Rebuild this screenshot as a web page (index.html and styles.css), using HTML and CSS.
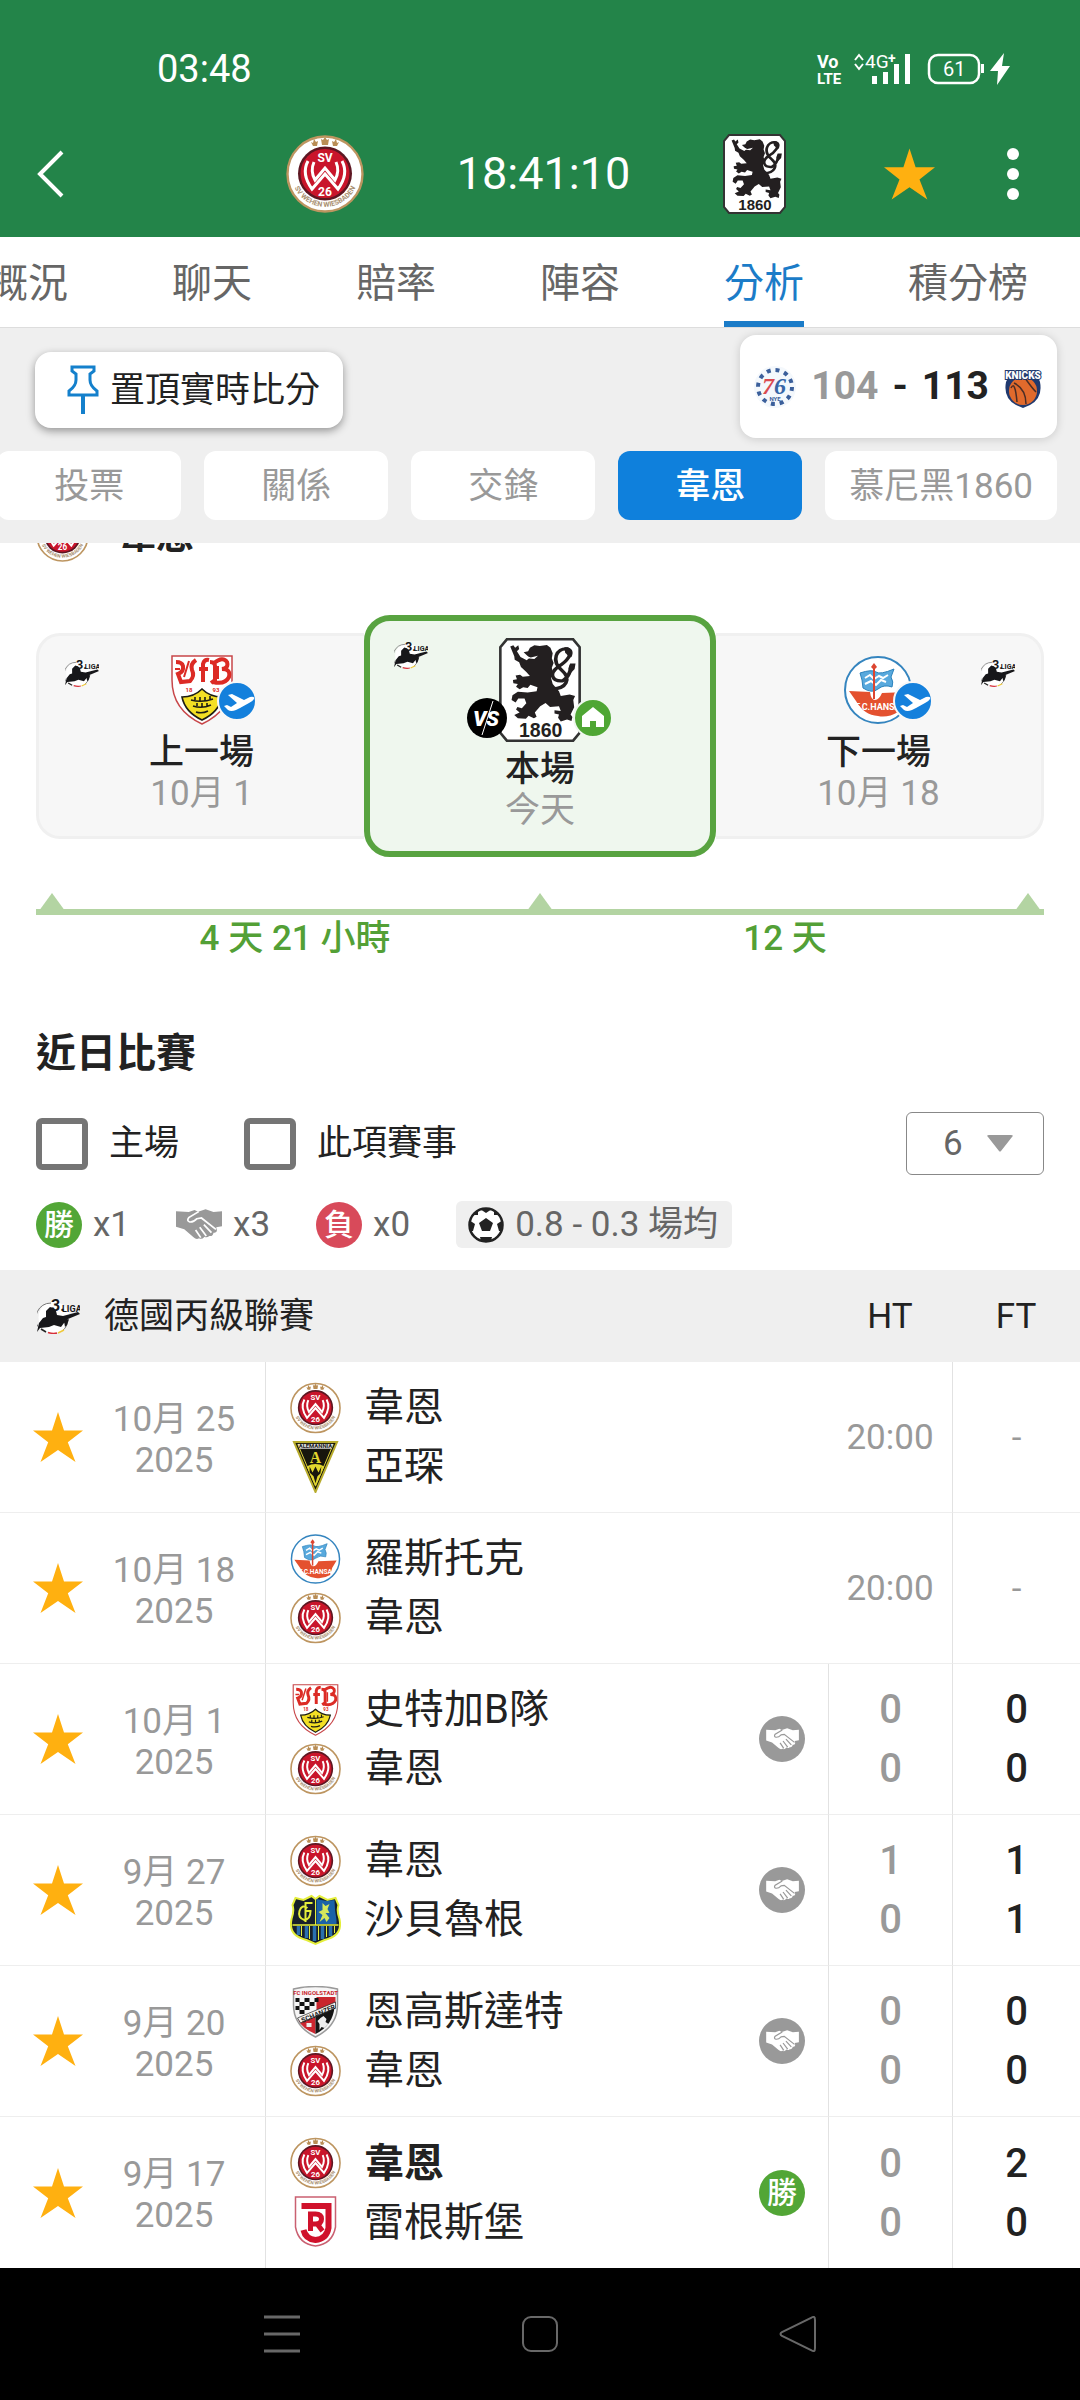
FILE: index.html
```html
<!DOCTYPE html>
<html lang="zh-Hant">
<head>
<meta charset="utf-8">
<meta name="viewport" content="width=device-width, initial-scale=1">
<title>分析</title>
<link rel="stylesheet" href="styles.css">
</head>
<body>
<svg class="sprite" aria-hidden="true">
  <defs>
    <path id="wehen-arc" d="M6 46A34 34 0 0 0 72 46"/>
  </defs>

  <symbol id="star" viewBox="0 0 50 50">
    <path fill="#ffb010" d="M25 0l6 18.400h19L34.800 30.300 42.500 50 25 38 7.500 50l7.700-19.700L0 18.400h19z"/>
  </symbol>

  <symbol id="wehen" viewBox="0 0 78 78">
    <circle cx="39" cy="39" r="37.500" fill="#fff" stroke="#bd9560" stroke-width="2.400"/>
    <circle cx="39" cy="38.500" r="27" fill="#5d1722"/>
    <circle cx="39" cy="38.500" r="24.500" fill="#c9152b"/>
    <g fill="#b98d55"><path d="M28 4l2 3 2-1-1 5h-4l-2-4 2 1zM39 2l2 3 2-1-1 6h-6l-1-6 2 1zM50 4l-2 3-2-1 1 5h4l2-4-2 1z"/></g>
    <g fill="none" stroke="#fff" stroke-width="3">
      <path d="M22 26Q15 39 26 54L39 39 52 54Q63 39 56 26"/>
      <path d="M28 27Q24 36 29 45L39 33 49 45Q54 36 50 27"/>
    </g>
    <text x="39" y="27" class="svg-bold" font-size="12" text-anchor="middle" fill="#fff">SV</text>
    <text x="39" y="61" class="svg-bold" font-size="12" text-anchor="middle" fill="#fff">26</text>
    <text class="svg-bold" font-size="7" fill="#a98f70" text-anchor="middle"><textPath href="#wehen-arc" startOffset="50%">SV WEHEN WIESBADEN</textPath></text>
  </symbol>

  <symbol id="lion" viewBox="0 0 63 80">
    <path d="M6 1h51l5 6v66l-5 6H6l-5-6V7z" fill="#fff" stroke="#333" stroke-width="2"/>
    <g transform="translate(0 5) scale(.344 .31) translate(-535 -415)">
      <path fill="#231f20" d="M560 420l7-3 4 6 7-6 2 9-5 6 8 14 14 8 6-6-13-14 10-2 4-9 10-6 12 2 16-3 8 7 5 14-2 12 4 12-4 12 3 14-5 10 4 16 14 18 4 12 20-4 12 4-4 10 2 18-8 18 4 6-2 10-10-4-14 5-6-9 2-8-10-3 0-8 14 2-4-12-20 2-10-10-12 8-12 16 4 10-6 4-12-6-6 7-18-1-8-8 12-6-8-8 3-6 10 3 10-12-4-12-14 0-6 10-9-6 2-12 12-9 22 2 20-3 2-10-16-6-6 8-10-2-8 5-8-6 4-7-10-2-1-8 9-2-3-9 10-2 6 5 16-2-8-10-12-12-4-12-10-6-1-9z"/>
      <path fill="#fff" d="M592 442l14 5 16-4-8 8-16-2z"/>
      <path fill="none" stroke="#231f20" stroke-width="8" d="M655 525C685 525 697 500 676 480C650 455 663 423 688 426C704 434 686 458 667 470C645 489 655 507 677 505C692 496 695 480 697 466"/>
      <path fill="#231f20" d="M681 422c18-2 22 12 16 24-6 4-8-6-14-10zM694 462l12 0-2 14-12 14-2-16z"/>
    </g>
    <text x="32" y="76" class="svg-wide" font-size="15" text-anchor="middle" fill="#231f20">1860</text>
  </symbol>

  <symbol id="liga" viewBox="0 0 43 35">
    <circle cx="17" cy="18.500" r="15.500" fill="#fff"/>
    <path d="M2 29A15.500 15.500 0 0 1 14 4M31 21a15 15 0 0 1-6 11" fill="none" stroke="#777"/>
    <path fill="#17171a" d="M9 12l4-4 3 1 3 3 1 4 6 1 15-4 2 2-12 5-4 4-3 4-7-2-5 2-9 1-3 4 2-9 4-5 3-1zM27 22l5-2-2 6-2 2z"/>
    <path d="M4 30l5 3" stroke="#222" stroke-width="1.500"/><path d="M11 33.500q5 1.500 9 .5" fill="none" stroke="#d7303a" stroke-width="1.500"/><path d="M21 34l6-3" stroke="#efc93b" stroke-width="1.500"/>
    <text x="14" y="12" class="svg-bold" font-size="16" fill="#17171a">3.</text>
    <text x="25" y="13" class="svg-bold" font-size="9" fill="#17171a">LIGA</text>
  </symbol>

  <symbol id="vfb" viewBox="0 0 62 70">
    <path d="M1 1h60v24q0 30-30 44Q1 55 1 25z" fill="#fff" stroke="#c8474a" stroke-width="1.500"/>
    <path fill="none" stroke="#dc2b25" stroke-width="4" d="M5 7q6 0 7 4 1 6-5 8l3 8 9-1q5-5 2-11-2-6 4-10M32 27V9q1-5 6-4M28 14h9M39 7q5 0 5 4v14l-4 3M43 8q9-7 13-1 2 6-5 7 9 0 7 8-4 8-16 5"/>
    <path fill="none" stroke="#dc2b25" stroke-width="2" d="M4 14l5 0M13 22l5-16M47 11v13"/>
    <text x="18" y="37" class="svg-bold" font-size="6" text-anchor="middle" fill="#dc2b25">18</text>
    <text x="45" y="37" class="svg-bold" font-size="6" text-anchor="middle" fill="#dc2b25">93</text>
    <path d="M11 42q12 0 20-8 8 8 20 8-3 15-20 23Q14 57 11 42z" fill="#f3df24" stroke="#1d1d14" stroke-width="1.600"/>
    <path fill="none" stroke="#1d1d14" stroke-width="1.600" d="M20 45q11 3 22-1M22 51q9 3 18-1M25 57q6 2 12-1M24 45v-3M29 46v-4M34 46v-4M39 45v-4M26 51v-3M31 52v-4M36 51v-3"/>
  </symbol>

  <symbol id="hansa" viewBox="0 0 70 70">
    <circle cx="35" cy="35" r="33" fill="#fff" stroke="#3585bf" stroke-width="2"/>
    <path d="M17 18q12-4 16-1t18-3l-3 8q3 5 1 10-8-3-14 2t-15-1l-1-8z" fill="#58a9dd" stroke="#2c83bd"/>
    <path d="M22 23l5-3 4 4 5-3 4 2 5-3M22 29l6-3 5 4 5-5 5 2" fill="none" stroke="#fff" stroke-width="2"/>
    <path d="M28 12l3-4 3 4-3 3z" fill="#dc4530"/>
    <path d="M6 36l21 1q1 8 5 8t7-7l25-1-6 10-3 10q-10 6-20 4-14-1-22-15z" fill="#e4512f"/>
    <path d="M31 10v34" stroke="#dc4530" stroke-width="2"/>
    <text x="35" y="55" class="svg-bold" font-size="9" text-anchor="middle" fill="#fff">F.C.HANSA</text>
  </symbol>

  <symbol id="aachen" viewBox="0 0 50 53">
    <path d="M3 1h44L25 52z" fill="#17160d" stroke="#b8ac2e" stroke-width="2"/>
    <path d="M7 3.500h36L25 46z" fill="none" stroke="#ded33b"/>
    <path d="M7 3h36l-2 5H9z" fill="#ddd"/>
    <text x="25" y="7.500" class="svg-bold" font-size="6" text-anchor="middle" fill="#222">ALEMANNIA</text>
    <path d="M16 26q9-5 18 0l-9 20z" fill="#e3d82e"/>
    <path d="M19 26l3 6 3-6 3 6 3-6-1 7-3 3-2 7-2-7-4-4z" fill="#17160d"/>
    <text x="25" y="22" class="svg-serif" font-size="16" text-anchor="middle" fill="#e3d82e">A</text>
  </symbol>

  <symbol id="saar" viewBox="0 0 50 52">
    <path d="M5 4l8 2 8-4 4 3 4-3 8 4 8-2 3 7q-2 6 1 14 2 10-3 15-4 4-12 6l-9 4-9-4Q8 44 4 40q-5-5-3-15 3-8 1-14z" fill="#17202b" stroke="#e4ee3a" stroke-width="2"/>
    <path d="M26 5l10 2 8-1q0 9 2 20v4H26z" fill="#1b62a8"/>
    <path d="M2 31h46" stroke="#e4ee3a" stroke-width="1.500"/><path d="M25 6v25" stroke="#e4ee3a"/>
    <path d="M8 32v9M16 32v12M24 32v15M32 32v13M40 32v10" stroke="#2a6fae" stroke-width="3.500"/>
    <path d="M11 32v10M19 32v13M28 32v14M36 32v11M44 32v7" stroke="#e4ee3a"/>
    <path d="M17 14q-6-4-8 3t5 9q6-1 6-9M15 28V9h7M15 17h6" fill="none" stroke="#e4ee3a" stroke-width="2"/>
    <path d="M32 9l3 3 4-2-2 5 2 4-4 0 4 5-3 4-2-4-5 4 3-7-4-3 4-2z" fill="#d5e75b"/>
  </symbol>

  <symbol id="ingol" viewBox="0 0 50 52">
    <path d="M3 3q22-5 44 0v16q0 21-22 32Q3 40 3 19z" fill="#f6f6f6" stroke="#9a9a9a" stroke-width="1.500"/>
    <path d="M26 11h19v7L26 24z" fill="#c9252d"/>
    <path d="M5 12h4v4H5zM14 12h5v4h-5zM9 16h5v4H9zM19 16h5v4h-5zM5 20h4v4H5zM14 20h5v4h-5zM9 24h5v4H9zM24 12h4v4h-4z" fill="#111"/>
    <path d="M8 34l17-7v21Q11 42 8 34z" fill="#cc2630"/><path d="M25 28l19-8q-1 19-19 28z" fill="#151515"/>
    <path d="M7 32l38-16v6L10 37z" fill="#f3f3f3" stroke="#222" stroke-width=".7"/>
    <path d="M30 32l3-2 3 3-1 3 3 2-4 4-3-1-2 3v-6l-2-3z" fill="#eee"/><path d="M16 37h5v4h-5z" fill="#eee"/>
    <text x="25" y="9" class="svg-bold" font-size="6" text-anchor="middle" fill="#c9252d">FC INGOLSTADT</text>
    <text x="28" y="30" class="svg-bold" font-size="7" text-anchor="middle" fill="#222" transform="rotate(-23 28 28)">SCHANZER</text>
  </symbol>

  <symbol id="regens" viewBox="0 0 50 52">
    <path d="M5 1h40v30q-3 17-20 19Q8 48 5 31z" fill="#fff" stroke="#ca6071" stroke-width="1.500"/>
    <path d="M11 10h27v22q-2 11-13 12-10-1-12-10" fill="none" stroke="#d0112b" stroke-width="6"/>
    <path d="M20 35V18h5q6 0 6 5t-6 5h-4M26 27l6 8" fill="none" stroke="#d0112b" stroke-width="5"/>
  </symbol>

  <symbol id="shake" viewBox="0 0 46 31">
    <g transform="scale(.344 .333) translate(-511 -629)">
      <path fill="currentColor" d="M511 636l37 2 17-6 10 5 22-7 23 8 25-2v45l-17 3 2 9q0 9-10 7-2 12-12 10-8 6-14 2-8 10-16 5-8 5-16-3l-27-24-24-8z"/>
      <path fill="none" class="shake-gap" stroke-width="5" d="M577 637l-29 18q-7 10 3 13 11 1 21-10l13-2 42 34M592 676l22 24M580 684l19 26M568 692l15 23"/>
    </g>
  </symbol>

  <symbol id="plane" viewBox="0 0 40 40">
    <circle cx="20" cy="20" r="19" fill="#1480dc" stroke="#f7f7f7" stroke-width="2"/>
    <path fill="#fff" d="M7 25l3-1 4 2 6-4-9-8 4-1 12 6 6-3q5-1 4 2-1 2-5 4l-9 5-4 2q-5 2-8 0z"/>
  </symbol>
</svg>

<header class="top">
  <div class="status">
    <span class="clock">03:48</span>
    <svg class="status-icons" viewBox="0 0 196 32" aria-hidden="true">
      <g fill="#fff">
        <text x="0" y="15" class="svg-bold" font-size="18">Vo</text>
        <text x="0" y="31" class="svg-bold" font-size="15">LTE</text>
        <text x="48" y="15" class="svg-plain" font-size="19">4G</text>
        <text x="71" y="10" class="svg-bold" font-size="14">+</text>
        <path d="M55 23h5v8h-5zM66 19h5v12h-5zM77 11h5v20h-5zM88 1h5v30h-5z"/>
        <path d="M164 11h3v9h-3zM187 0l-14 18h8l-1 14 13-19h-8z"/>
        <text x="126" y="23" class="svg-plain" font-size="20">61</text>
      </g>
      <path d="M38 7l4-5 4 5M38 11l4 5 4-5" fill="none" stroke="#fff" stroke-width="2"/>
      <rect x="112" y="2" width="50" height="28" rx="9" fill="none" stroke="#fff" stroke-width="2.500"/>
    </svg>
  </div>
  <div class="appbar">
    <button class="icon-btn" aria-label="返回"><svg width="27" height="46" viewBox="0 0 27 46"><path d="M25 1L3 23l22 22" fill="none" stroke="#fff" stroke-width="4"/></svg></button>
    <div class="match">
      <svg class="crest-78"><use href="#wehen"/></svg>
      <h1>18:41:10</h1>
      <svg class="crest-lion"><use href="#lion"/></svg>
    </div>
    <div class="actions">
      <button class="icon-btn" aria-label="收藏"><svg width="51" height="52"><use href="#star"/></svg></button>
      <button class="icon-btn" aria-label="更多"><svg width="44" height="52" viewBox="0 0 44 52" fill="#fff"><circle cx="22" cy="6" r="6"/><circle cx="22" cy="26" r="6"/><circle cx="22" cy="46" r="6"/></svg></button>
    </div>
  </div>
</header>

<nav class="tabs">
  <a href="#">概況</a><a href="#">聊天</a><a href="#">賠率</a><a href="#">陣容</a><a href="#" class="active" aria-current="page">分析</a><a href="#">積分榜</a>
</nav>

<section class="tools">
  <div class="tools-row">
    <button class="pin">
      <svg width="32" height="50" viewBox="0 0 32 50"><path d="M5 2h22v4l-4 3v6q0 6 7 11v4H2v-4q7-5 7-11V9L5 6z" fill="#fff" stroke="#1480cc" stroke-width="3"/><path d="M16 30v19" stroke="#1480cc" stroke-width="4"/></svg>
      <span>置頂實時比分</span>
    </button>
    <a href="#" class="score">
      <svg width="44" height="44" viewBox="0 0 44 44">
        <circle cx="22" cy="22" r="21" fill="#f4f8fc"/><circle cx="22" cy="22" r="17" fill="none" stroke="#3b5f9b" stroke-width="4" stroke-dasharray="4 4.900"/>
        <text x="9" y="29" class="svg-script" font-size="24" fill="#da4b50">7</text><text x="21" y="29" class="svg-script" font-size="24" fill="#3766a7">6</text>
        <text x="22" y="36" class="svg-bold" font-size="6" text-anchor="middle" fill="#3b5f9b">NYE</text>
      </svg>
      <span class="lost">104</span><span>-</span><span>113</span>
      <svg width="40" height="42" viewBox="0 0 40 42">
        <path d="M3 16q2-8 17-8t17 8q3 16-10 23l-7 3-7-3Q0 32 3 16z" fill="#20396e"/>
        <circle cx="20" cy="25" r="14" fill="#e16a2c"/><path d="M11 17q12 6 12 21M22 12q7 10 11 14M8 22q4-8 6 14" fill="none" stroke="#4b2d26" stroke-width="1.500"/>
        <text x="20" y="13" class="knicks" font-size="10" text-anchor="middle">KNICKS</text>
      </svg>
    </a>
  </div>
  <div class="chips">
    <button>投票</button><button>關係</button><button>交鋒</button><button class="on">韋恩</button><button>慕尼黑1860</button>
  </div>
</section>

<main>
  <section class="pad">
    <h2 class="team-heading"><svg class="crest-53"><use href="#wehen"/></svg>韋恩</h2>

    <div class="fixtures">
      <article class="fixture">
        <svg class="liga-s"><use href="#liga"/></svg>
        <div class="emblem"><svg class="crest-70"><use href="#vfb"/></svg><svg class="badge away"><use href="#plane"/></svg></div>
        <strong>上一場</strong><span>10月 1</span>
      </article>
      <article class="fixture current">
        <svg class="liga-s"><use href="#liga"/></svg>
        <div class="emblem"><svg class="crest-104"><use href="#lion"/></svg>
          <svg class="badge versus" viewBox="0 0 40 40"><circle cx="20" cy="20" r="20" fill="#000"/><text x="19" y="28" class="svg-vs" font-size="21" text-anchor="middle" fill="#fff">VS</text><path d="M26 3L15 37" stroke="#fff"/></svg>
          <svg class="badge home" viewBox="0 0 40 40"><circle cx="20" cy="20" r="19" fill="#4fa634" stroke="#eff7ee" stroke-width="2"/><path d="M20 9l11 9v11h-8v-6h-6v6H9V18z" fill="#fff"/></svg>
        </div>
        <strong>本場</strong><span>今天</span>
      </article>
      <article class="fixture next">
        <svg class="liga-s"><use href="#liga"/></svg>
        <div class="emblem"><svg class="crest-70"><use href="#hansa"/></svg><svg class="badge away"><use href="#plane"/></svg></div>
        <strong>下一場</strong><span>10月 18</span>
      </article>
    </div>

    <div class="timeline"><i></i><i></i><i></i></div>
    <div class="gaps"><span>4 天 21 小時</span><span>12 天</span></div>

    <h2 class="recent">近日比賽</h2>

    <div class="filters">
      <label><input type="checkbox">主場</label>
      <label><input type="checkbox">此項賽事</label>
      <div class="count">
        <select aria-label="場數"><option>6</option></select>
        <svg width="26" height="17" viewBox="0 0 26 17" aria-hidden="true"><path d="M2 0h22q3 0 1 2L14 16q-1 1-2 0L1 2Q-1 0 2 0z" fill="#999"/></svg>
      </div>
    </div>

    <div class="stats">
      <div><b class="mark win">勝</b>x1</div>
      <div><svg class="shake"><use href="#shake"/></svg>x3</div>
      <div><b class="mark loss">負</b>x0</div>
      <div class="average">
        <svg width="36" height="36" viewBox="0 0 36 36"><circle cx="18" cy="18" r="16.500" fill="#fff" stroke="#222" stroke-width="2.500"/><path fill="#222" d="M18 11l7 5-3 8h-8l-3-8zM12 2h12l-6 4zM1 13l6 4-2 7-3 0zM35 13l-6 4 2 7 3 0zM12 30h12l-1 4-5 1-5-1zM5 8l5-5 0 5zM31 8l-5-5 0 5z"/></svg>
        0.8 - 0.3 場均
      </div>
    </div>
  </section>

  <table class="results">
    <colgroup><col class="c-star"><col class="c-date"><col><col class="c-ht"><col class="c-ft"></colgroup>
    <thead>
      <tr><th colspan="3" scope="colgroup"><div class="league"><svg width="43" height="35"><use href="#liga"/></svg>德國丙級聯賽</div></th><th scope="col">HT</th><th scope="col">FT</th></tr>
    </thead>
    <tbody>
      <tr>
        <td class="fav"><button class="icon-btn" aria-label="收藏"><svg><use href="#star"/></svg></button></td>
        <td class="date">10月 25<br>2025</td>
        <td class="teams"><div class="pair"><div>
          <p><svg><use href="#wehen"/></svg>韋恩</p>
          <p><svg><use href="#aachen"/></svg>亞琛</p></div></div></td>
        <td>20:00</td><td class="line">-</td>
      </tr>
      <tr>
        <td class="fav"><button class="icon-btn" aria-label="收藏"><svg><use href="#star"/></svg></button></td>
        <td class="date">10月 18<br>2025</td>
        <td class="teams"><div class="pair"><div>
          <p><svg><use href="#hansa"/></svg>羅斯托克</p>
          <p><svg><use href="#wehen"/></svg>韋恩</p></div></div></td>
        <td>20:00</td><td class="line">-</td>
      </tr>
      <tr>
        <td class="fav"><button class="icon-btn" aria-label="收藏"><svg><use href="#star"/></svg></button></td>
        <td class="date">10月 1<br>2025</td>
        <td class="teams"><div class="pair"><div>
          <p><svg><use href="#vfb"/></svg>史特加B隊</p>
          <p><svg><use href="#wehen"/></svg>韋恩</p></div>
          <span class="mark draw"><svg><use href="#shake"/></svg></span></div></td>
        <td class="line ht">0<br>0</td><td class="line ft">0<br>0</td>
      </tr>
      <tr>
        <td class="fav"><button class="icon-btn" aria-label="收藏"><svg><use href="#star"/></svg></button></td>
        <td class="date">9月 27<br>2025</td>
        <td class="teams"><div class="pair"><div>
          <p><svg><use href="#wehen"/></svg>韋恩</p>
          <p><svg><use href="#saar"/></svg>沙貝魯根</p></div>
          <span class="mark draw"><svg><use href="#shake"/></svg></span></div></td>
        <td class="line ht">1<br>0</td><td class="line ft">1<br>1</td>
      </tr>
      <tr>
        <td class="fav"><button class="icon-btn" aria-label="收藏"><svg><use href="#star"/></svg></button></td>
        <td class="date">9月 20<br>2025</td>
        <td class="teams"><div class="pair"><div>
          <p><svg><use href="#ingol"/></svg>恩高斯達特</p>
          <p><svg><use href="#wehen"/></svg>韋恩</p></div>
          <span class="mark draw"><svg><use href="#shake"/></svg></span></div></td>
        <td class="line ht">0<br>0</td><td class="line ft">0<br>0</td>
      </tr>
      <tr>
        <td class="fav"><button class="icon-btn" aria-label="收藏"><svg><use href="#star"/></svg></button></td>
        <td class="date">9月 17<br>2025</td>
        <td class="teams"><div class="pair"><div>
          <p class="winner"><svg><use href="#wehen"/></svg>韋恩</p>
          <p><svg><use href="#regens"/></svg>雷根斯堡</p></div>
          <b class="mark win">勝</b></div></td>
        <td class="line ht">0<br>0</td><td class="line ft">2<br>0</td>
      </tr>
    </tbody>
  </table>
</main>

<footer class="sysnav">
  <button class="icon-btn" aria-label="最近"><svg viewBox="0 0 38 38"><path d="M1 2h36M1 19h36M1 36h36" stroke="#686868" stroke-width="3"/></svg></button>
  <button class="icon-btn" aria-label="主頁"><svg viewBox="0 0 38 38"><rect x="2" y="2" width="34" height="34" rx="8" fill="none" stroke="#686868" stroke-width="2"/></svg></button>
  <button class="icon-btn" aria-label="返回"><svg viewBox="0 0 38 38"><path d="M32 3Q36 0 36 5v28q0 5-4 2L3 21q-3-2 0-4z" fill="none" stroke="#686868" stroke-width="2"/></svg></button>
</footer>
</body>
</html>
```

FILE: styles.css
```css
* {
  box-sizing: border-box;
}

body {
  margin: 0;
  min-height: 100vh;
  display: flex;
  flex-direction: column;
  background: #fff;
  color: #222;
  font-family: Roboto, "Noto Sans CJK TC", sans-serif;
  font-size: 35px;
  line-height: 41px;
  overflow-x: hidden;
}

svg {
  display: block;
  flex: none;
  overflow: visible;
}

h1,
h2,
p {
  margin: 0;
}

button,
select {
  font: inherit;
  color: inherit;
  border: 0;
  cursor: pointer;
}

a {
  color: inherit;
  text-decoration: none;
}

.sprite {
  display: none;
}

.icon-btn {
  display: block;
  padding: 0;
  background: none;
}

/* lettering inside crests and status icons */
.svg-bold {
  font-family: "Liberation Sans Narrow", Roboto, sans-serif;
  font-weight: 700;
}

.svg-wide {
  font-family: "Liberation Sans", sans-serif;
  font-weight: 700;
}

.svg-plain {
  font-family: Roboto, sans-serif;
}

.svg-serif {
  font-family: "Liberation Serif", serif;
  font-weight: 700;
}

.svg-script {
  font-family: "Liberation Serif", serif;
  font-weight: 700;
  font-style: italic;
}

.svg-vs {
  font-family: Roboto, sans-serif;
  font-weight: 900;
  font-style: italic;
}

.knicks {
  font-family: Roboto, sans-serif;
  font-weight: 900;
  fill: #fff;
  stroke: #20396e;
  stroke-width: 2;
  paint-order: stroke;
}

/* header */
.top {
  background: #238449;
  color: #fff;
}

.status {
  display: flex;
  align-items: center;
  justify-content: space-between;
  height: 110px;
  padding: 28px 67px 0 157px;
}

.clock {
  font-size: 38px;
}

.status-icons {
  width: 196px;
  height: 32px;
}

.appbar {
  display: grid;
  grid-template-columns: 1fr auto 1fr;
  align-items: center;
  height: 127px;
  padding: 0 45px 0 37px;
}

.match {
  display: flex;
  align-items: center;
  gap: 93px;
}

.match h1 {
  font-size: 45px;
  font-weight: 400;
}

.actions {
  display: flex;
  align-items: center;
  justify-content: flex-end;
  gap: 56px;
}

.crest-78 {
  width: 78px;
  height: 78px;
}

.crest-lion {
  width: 63px;
  height: 80px;
}

/* main tabs, scrolled to the end */
.tabs {
  display: flex;
  justify-content: flex-end;
  height: 91px;
  overflow: hidden;
  border-bottom: 1px solid #ddd;
  font-size: 40px;
  line-height: 93px;
  color: #666;
}

.tabs a {
  flex: none;
  height: 90px;
  margin: 0 52px;
}

.tabs .active {
  color: #1b7cc8;
  box-shadow: inset 0 -6px 0 #1b7cc8;
}

/* pinned score and section chips */
.tools {
  position: relative;
  z-index: 1;
  padding: 7px 0 23px;
  background: #efefef;
}

.tools-row {
  display: flex;
  align-items: center;
  justify-content: space-between;
  padding: 0 23px 0 35px;
}

.pin {
  display: flex;
  align-items: center;
  gap: 11px;
  height: 76px;
  margin-top: 7px;
  padding: 0 23px 0 32px;
  border-radius: 16px;
  background: #fff;
  box-shadow: 0 3px 9px rgba(0, 0, 0, .38);
}

.score {
  display: flex;
  align-items: center;
  gap: 14px;
  height: 103px;
  padding: 0 14px 0 13px;
  border-radius: 16px;
  background: #fff;
  box-shadow: 0 1px 10px rgba(0, 0, 0, .16);
  font-size: 39px;
  font-weight: 700;
}

.lost {
  color: #999;
}

.chips {
  display: flex;
  justify-content: flex-end;
  gap: 23px;
  margin-top: 13px;
  padding-right: 23px;
  overflow: hidden;
}

.chips button {
  flex: none;
  min-width: 184px;
  height: 69px;
  padding: 2px 24px 0;
  border-radius: 12px;
  background: #fff;
  color: #999;
}

.chips .on {
  background: #0f80dc;
  color: #fff;
  font-weight: 500;
}

.pad {
  padding: 0 36px;
}

.team-heading {
  display: flex;
  align-items: center;
  gap: 29px;
  height: 53px;
  margin-top: -34px;
  font-size: 38px;
}

.crest-53 {
  width: 53px;
  height: 53px;
}

/* previous / current / next match */
.fixtures {
  display: grid;
  grid-template-columns: 14fr 15fr 14fr;
  margin-top: 53px;
}

.fixture {
  position: relative;
  display: flex;
  flex-direction: column;
  align-items: center;
  margin: 18px 0;
  padding: 19px 0 18px;
  border: 3px solid #f0f0f0;
  border-right: 0;
  border-radius: 24px 0 0 24px;
  background: #f7f7f7;
  color: #999;
}

.fixture.next {
  border-right: 3px solid #f0f0f0;
  border-left: 0;
  border-radius: 0 24px 24px 0;
}

.fixture.current {
  margin: 0;
  padding: 17px 0 20px;
  border: 6px solid #58a340;
  border-radius: 26px;
  background: #eff7ee;
}

.fixture strong {
  margin-top: 7px;
  color: #222;
  font-weight: 500;
}

.liga-s {
  position: absolute;
  top: 23px;
  left: 26px;
  width: 34px;
  height: 28px;
}

.current .liga-s {
  top: 20px;
  left: 24px;
}

.next .liga-s {
  right: 26px;
  left: auto;
}

.emblem {
  position: relative;
}

.crest-70 {
  width: 70px;
  height: 70px;
}

.crest-104 {
  width: 82px;
  height: 104px;
}

.badge {
  position: absolute;
  width: 40px;
  height: 40px;
}

.away {
  right: -20px;
  bottom: 4px;
}

.home {
  right: -32px;
  bottom: 4px;
}

.versus {
  left: -32px;
  bottom: 4px;
}

.timeline {
  display: flex;
  justify-content: space-between;
  height: 22px;
  margin-top: 36px;
  box-shadow: inset 0 -6px 0 #b3d4a2;
}

.timeline i {
  width: 32px;
  background: #b3d4a2;
  clip-path: polygon(50% 0, 100% 100%, 0 100%);
}

.gaps {
  display: grid;
  grid-template-columns: 1fr 1fr;
  padding: 0 14px;
  line-height: 48px;
  text-align: center;
  color: #53a036;
  font-weight: 500;
}

.recent {
  margin-top: 62px;
  font-size: 40px;
  line-height: 58px;
}

/* filters */
.filters {
  display: flex;
  align-items: center;
  gap: 65px;
  margin-top: 29px;
}

.filters label {
  display: flex;
  align-items: center;
  gap: 21px;
}

.filters input {
  appearance: none;
  width: 52px;
  height: 52px;
  margin: 0;
  border: 6px solid #757575;
  border-radius: 6px;
}

.count {
  display: grid;
  align-items: center;
  margin-left: auto;
}

.count select,
.count svg {
  grid-area: 1 / 1;
}

.count select {
  appearance: none;
  width: 138px;
  height: 63px;
  padding: 0 36px;
  border: 1px solid #888;
  border-radius: 6px;
  background: #fff;
  color: #666;
}

.count svg {
  justify-self: end;
  margin-right: 31px;
  pointer-events: none;
}

.stats {
  display: flex;
  gap: 46px;
  margin-top: 26px;
  color: #666;
}

.stats > div {
  display: flex;
  align-items: center;
  gap: 11px;
  height: 47px;
}

.stats .average {
  padding: 0 14px 0 12px;
  border-radius: 6px;
  background: #efefef;
}

.mark {
  display: grid;
  place-items: center;
  width: 46px;
  height: 46px;
  border-radius: 50%;
  color: #fff;
  font-size: 30px;
  font-weight: 500;
  line-height: 44px;
}

.win {
  background: #52a636;
}

.loss {
  background: #d84a5a;
}

.draw {
  background: #999;
}

.shake {
  width: 46px;
  height: 31px;
  color: #999;
}

.shake-gap {
  stroke: var(--gap, #fff);
}

.draw svg {
  --gap: #999;
  width: 33px;
  height: 22px;
}

/* results table */
.results {
  width: 100%;
  margin-top: 22px;
  table-layout: fixed;
  border-spacing: 0;
  text-align: center;
}

.c-star {
  width: 83px;
}

.c-date {
  width: 182px;
}

.c-ht {
  width: 124px;
}

.c-ft {
  width: 128px;
}

.results th {
  height: 92px;
  padding: 0;
  background: #efefef;
  font-weight: 400;
}

.league {
  display: flex;
  align-items: center;
  gap: 24px;
  padding-left: 37px;
}

.results td {
  height: 151px;
  padding: 0;
  border-bottom: 1px solid #eee;
  color: #999;
}

.results tr:last-child td {
  border-bottom: 0;
}

.results .line,
.results .teams {
  border-left: 1px solid #e2e2e2;
}

.results .date {
  padding-top: 5px;
}

.results .teams {
  color: #222;
  font-size: 40px;
  line-height: 59px;
}

.results .ht,
.results .ft {
  font-size: 40px;
  line-height: 59px;
  font-weight: 500;
}

.results .ft {
  color: #222;
}

.fav svg {
  width: 50px;
  height: 50px;
  margin-left: 33px;
}

.pair {
  display: flex;
  align-items: center;
  justify-content: space-between;
  padding: 0 23px 0 24px;
}

.pair p {
  display: flex;
  align-items: center;
  gap: 23px;
}

.pair p svg {
  width: 51px;
  height: 52px;
}

.winner {
  font-weight: 700;
}

/* system navigation */
.sysnav {
  display: flex;
  flex: 1;
  align-items: center;
  justify-content: center;
  gap: 220px;
  min-height: 132px;
  background: #000;
}

.sysnav svg {
  width: 38px;
  height: 38px;
}
```
